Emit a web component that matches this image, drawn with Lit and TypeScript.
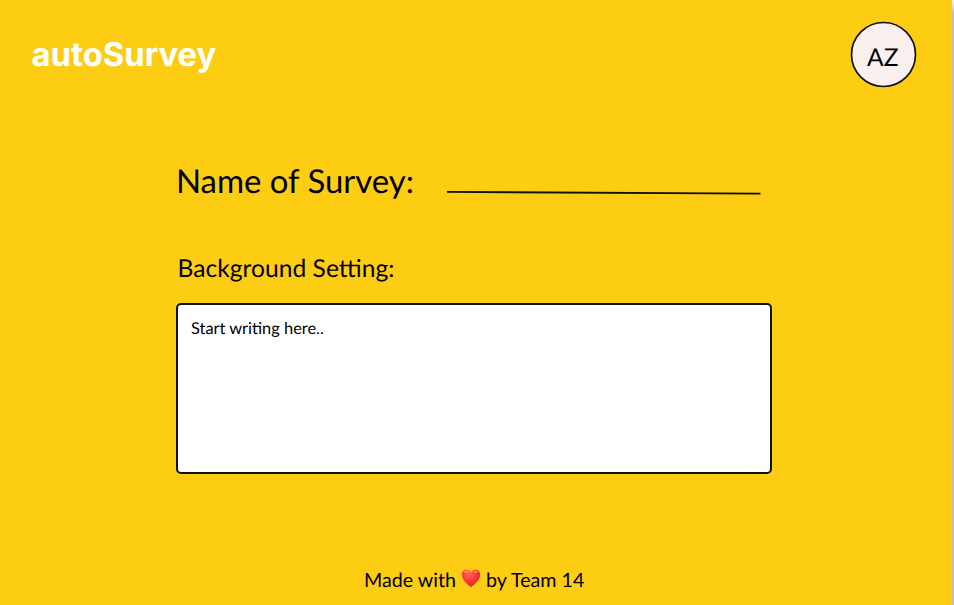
import { LitElement, html, css } from "lit";
import { customElement } from "lit/decorators.js";

@customElement("app-root")
export class AppRoot extends LitElement {
  static styles = css`
    :host {
      display: block;
      width: 954px;
      height: 605px;
      overflow: hidden;
      background: linear-gradient(#f4f2ea, #c2beb0 14px);
      color: #000;
      font-family: Lato, Carlito, sans-serif;
      text-rendering: geometricPrecision;
    }
    .page {
      box-sizing: border-box;
      width: 952px;
      height: 605px;
      background: #fdcd13;
      display: flex;
      flex-direction: column;
      white-space: nowrap;
    }
    header {
      display: flex;
      justify-content: space-between;
      padding: 21px 35px 0 31.5px;
      height: 67px;
    }
    .logo {
      margin: 13px 0 0;
      font: 700 32.8px/40px Inter, sans-serif;
      color: #fff;
    }
    .avatar {
      display: grid;
      place-items: center;
      width: 67px;
      height: 67px;
      font-size: 24.6px;
      line-height: 30px;
    }
    .avatar > * {
      grid-area: 1 / 1;
    }
    .avatar span {
      padding: 6px 1.5px 0 0;
    }
    main {
      width: 596px;
      margin: 73px 0 0 176px;
    }
    .name {
      display: flex;
      height: 42px;
      font-size: 32.9px;
      line-height: 42px;
    }
    .name span {
      width: 270px;
    }
    .rule {
      display: block;
      margin-top: 29px;
    }
    .label {
      display: block;
      margin: 50px 0 0 1.5px;
      font-size: 24.65px;
      line-height: 32px;
    }
    .box {
      box-sizing: border-box;
      height: 171px;
      margin-top: 18px;
      border: 2px solid #111;
      border-radius: 5px;
      background: #fff;
      padding: 13px;
      font-size: 16.4px;
      line-height: 22px;
    }
    footer {
      display: flex;
      margin: 93px 0 0 364px;
      font-size: 19.7px;
      line-height: 28px;
    }
    .heart {
      margin: 2px 5px 0 5px;
    }
  `;

  render() {
    return html`
      <div class="page">
        <header>
          <h1 class="logo">autoSurvey</h1>
          <div class="avatar">
            <svg width="67" height="67" viewBox="0 0 67 67">
              <circle cx="33.5" cy="33.5" r="32" fill="#f9f0ef" stroke="#111" stroke-width="1.7" />
            </svg>
            <span>AZ</span>
          </div>
        </header>
        <main>
          <div class="name">
            <span>Name of Survey:</span>
            <svg class="rule" width="316" height="6" viewBox="0 0 316 6">
              <path d="M1 1.9 L314.5 3.6" stroke="#111" stroke-width="1.8" />
            </svg>
          </div>
          <span class="label">Background Setting:</span>
          <div class="box">Start writing here..</div>
        </main>
        <footer>
          <span>Made with</span>
          <svg class="heart" width="20" height="19" viewBox="0 0 20 19">
            <defs>
              <radialGradient id="fill" cx="0.38" cy="0.25" r="0.75">
                <stop offset="0" stop-color="#ff6a55" />
                <stop offset="0.5" stop-color="#fb3c38" />
                <stop offset="1" stop-color="#dc2329" />
              </radialGradient>
            </defs>
            <path
              fill="url(#fill)"
              d="M10 18.3 C7.5 16.2 0.8 11.3 0.8 5.8 C0.8 2.6 3 0.7 5.4 0.7 C7.6 0.7 9.2 1.9 10 3.7 C10.8 1.9 12.4 0.7 14.6 0.7 C17 0.7 19.2 2.6 19.2 5.8 C19.2 11.3 12.5 16.2 10 18.3 Z"
            />
            <ellipse cx="5.2" cy="2.8" rx="2.5" ry="1.1" fill="#ffb09c" opacity="0.6" />
            <ellipse cx="14.6" cy="2.8" rx="2.5" ry="1.1" fill="#ffb09c" opacity="0.6" />
          </svg>
          <span>by Team 14</span>
        </footer>
      </div>
    `;
  }
}
